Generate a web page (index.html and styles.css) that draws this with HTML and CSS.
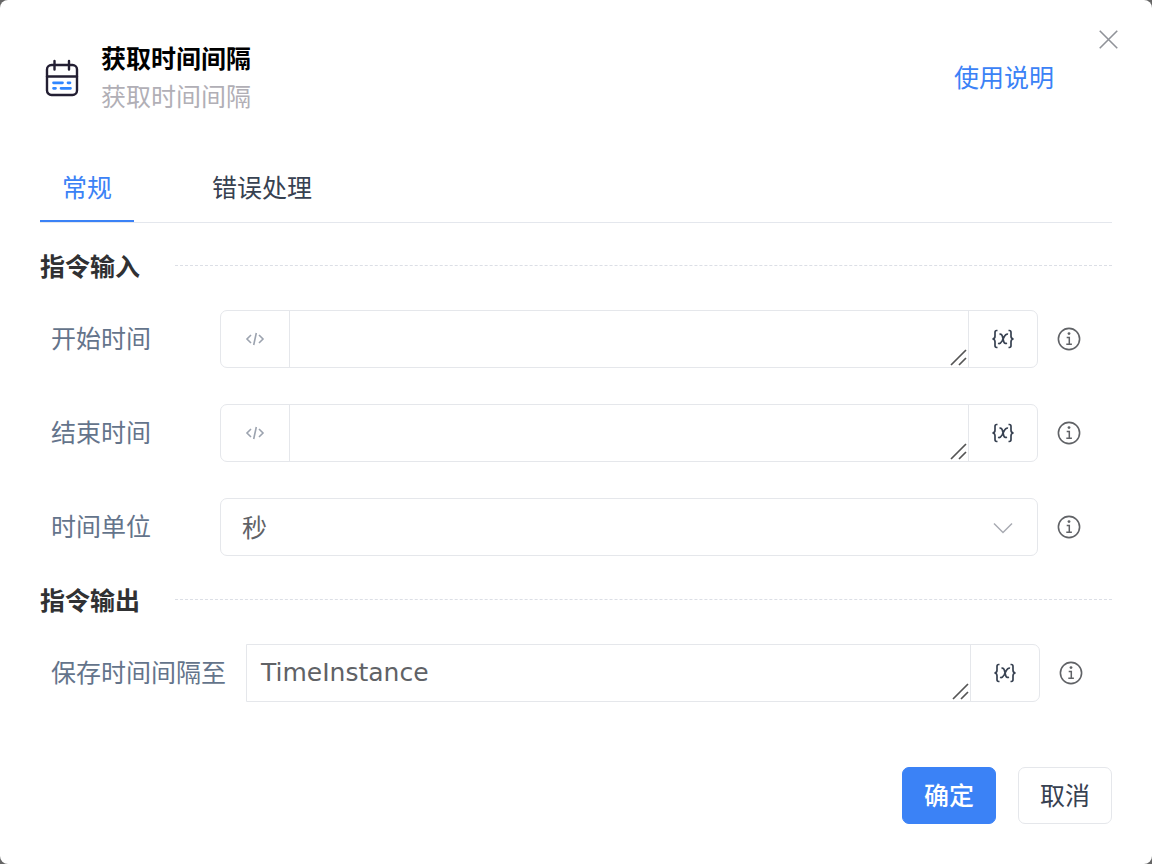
FILE: index.html
```html
<!DOCTYPE html>
<html lang="zh-CN">
<head>
<meta charset="utf-8">
<meta name="viewport" content="width=device-width, initial-scale=1">
<title>获取时间间隔</title>
<link rel="stylesheet" href="styles.css">
</head>
<body>
<svg class="symbols" aria-hidden="true">
  <symbol id="info" viewBox="0 0 24 24"><circle cx="12" cy="12" r="10.6" fill="none" stroke="currentColor" stroke-width="1.6"/><circle cx="12" cy="6.6" r="1.4" fill="currentColor"/><path d="M9.7 10.5H12.3V17.2M9.3 17.2H14.9" fill="none" stroke="currentColor" stroke-width="1.5"/></symbol>
  <symbol id="code" viewBox="0 0 20 14"><path d="M6 3L2 7L6 11M14 3L18 7L14 11M11.3 1L8.7 13" fill="none" stroke="currentColor" stroke-width="1.6"/></symbol>
  <symbol id="variable" viewBox="0 0 24 20"><path d="M6.5 1.5H5.6Q4 1.5 4 3.4V7.3Q4 9.7 1.5 10Q4 10.3 4 12.7V16.6Q4 18.5 5.6 18.5H6.5M17.5 1.5H18.4Q20 1.5 20 3.4V7.3Q20 9.7 22.5 10Q20 10.3 20 12.7V16.6Q20 18.5 18.4 18.5H17.5M8.5 5.4Q10.7 4.5 11.4 7.4L12.7 12.5Q13.4 15.2 16 14.2M17 5.3Q15 4.5 13.3 7.5L11 12.1Q9.1 15.3 7.1 14.3" fill="none" stroke="currentColor" stroke-width="1.7"/></symbol>
  <symbol id="grip" viewBox="0 0 17 17"><path d="M1 16L16 1M9 16L16 9" fill="none" stroke="currentColor" stroke-width="1.7"/></symbol>
</svg>
<main class="dialog">
  <header class="header">
    <svg class="logo" viewBox="0 0 34 38" aria-hidden="true">
      <rect x="2" y="6" width="30" height="30" rx="4.5" fill="none" stroke="#231f33" stroke-width="2.4"/>
      <path d="M2 17.5H32M9.5 2V10.5M24 2V10.5" fill="none" stroke="#231f33" stroke-width="2.4" stroke-linecap="round"/>
      <path d="M8.5 23.8H17.5M23 23.8H25M8.5 29.3H10.5M16 29.3H25.5" fill="none" stroke="#2f86ff" stroke-width="2.7" stroke-linecap="round"/>
    </svg>
    <div class="titles">
      <h1 class="title">获取时间间隔</h1>
      <p class="subtitle">获取时间间隔</p>
    </div>
    <a class="help" href="#">使用说明</a>
    <button class="close" type="button" aria-label="关闭"><svg class="close-icon" viewBox="0 0 18 18"><path d="M0.7 0.7L17.3 17.3M17.3 0.7L0.7 17.3" fill="none" stroke="currentColor" stroke-width="1.5"/></svg></button>
  </header>
  <nav class="tabs" role="tablist">
    <button class="tab active" type="button" role="tab" aria-selected="true">常规</button>
    <button class="tab" type="button" role="tab" aria-selected="false">错误处理</button>
  </nav>
  <form class="form">
    <h2 class="section">指令输入</h2>
    <div class="fields">
      <div class="row">
        <label class="label" for="start">开始时间</label>
        <div class="control">
          <button class="addon mode" type="button" aria-label="表达式"><svg class="code-icon"><use href="#code"/></svg></button>
          <div class="entry"><textarea class="text" id="start" rows="1"></textarea><svg class="grip"><use href="#grip"/></svg></div>
          <button class="addon variable" type="button" aria-label="变量"><svg class="variable-icon"><use href="#variable"/></svg></button>
        </div>
        <svg class="info"><use href="#info"/></svg>
      </div>
      <div class="row">
        <label class="label" for="end">结束时间</label>
        <div class="control">
          <button class="addon mode" type="button" aria-label="表达式"><svg class="code-icon"><use href="#code"/></svg></button>
          <div class="entry"><textarea class="text" id="end" rows="1"></textarea><svg class="grip"><use href="#grip"/></svg></div>
          <button class="addon variable" type="button" aria-label="变量"><svg class="variable-icon"><use href="#variable"/></svg></button>
        </div>
        <svg class="info"><use href="#info"/></svg>
      </div>
      <div class="row">
        <label class="label" for="unit">时间单位</label>
        <div class="control">
          <select class="select" id="unit"><option>秒</option></select>
          <svg class="arrow" viewBox="0 0 20 12"><path d="M1 1.5L10 10.5L19 1.5" fill="none" stroke="currentColor" stroke-width="1.5"/></svg>
        </div>
        <svg class="info"><use href="#info"/></svg>
      </div>
    </div>
    <h2 class="section">指令输出</h2>
    <div class="row output">
      <label class="label" for="save">保存时间间隔至</label>
      <div class="control">
        <div class="entry"><textarea class="text" id="save" rows="1">TimeInstance</textarea><svg class="grip"><use href="#grip"/></svg></div>
        <button class="addon variable" type="button" aria-label="变量"><svg class="variable-icon"><use href="#variable"/></svg></button>
      </div>
      <svg class="info"><use href="#info"/></svg>
    </div>
    <footer class="actions">
      <button class="button primary" type="button">确定</button>
      <button class="button" type="button">取消</button>
    </footer>
  </form>
</main>
</body>
</html>
```
FILE: styles.css
```css
* { box-sizing: border-box; }
html { background: #666; }
body {
  margin: 0;
  font-family: "Noto Sans CJK SC", sans-serif;
  font-size: 25px;
  line-height: 38px;
  color: #374151;
}
button, textarea, select { font: inherit; color: inherit; }
button { padding: 0; border: 0; background: none; cursor: pointer; }
h1, h2, p { margin: 0; font-size: inherit; }
svg { display: block; flex: none; }
.symbols { position: absolute; width: 0; height: 0; }

.dialog {
  position: relative;
  min-height: 100vh;
  padding: 38px 40px 40px;
  border-radius: 8px;
  background: #fff;
}
.header { display: flex; align-items: center; padding: 0 58px 0 5px; }
.logo { width: 34px; height: 38px; margin-top: 4px; }
.titles { flex: 1; margin-left: 22px; }
.title { font-weight: 700; color: #000; }
.subtitle { color: #b1afb6; }
.help { color: #3b82f6; text-decoration: none; }
.close { position: absolute; top: 30px; right: 34px; color: #909399; }
.close-icon { width: 19px; height: 19px; }

.tabs { display: flex; gap: 56px; margin-top: 40px; border-bottom: 1px solid #e4e7ed; }
.tab { height: 68px; padding: 0 22px 2px; border-bottom: 2px solid transparent; }
.tab.active { color: #3b82f6; border-bottom-color: #3b82f6; }

.section {
  display: flex;
  align-items: center;
  gap: 35px;
  margin: 23px 0 26px;
  font-weight: 700;
  color: #303133;
}
.section::after { content: ""; flex: 1; border-top: 1px dashed #dcdfe6; }
.fields { display: grid; gap: 36px; margin-bottom: 24px; }
.row { display: flex; align-items: center; padding: 0 31px 0 11px; }
.label { width: 169px; padding-bottom: 4px; color: #64748b; }
.output { padding-right: 29px; }
.output .label { width: auto; margin-right: 20px; }
.control {
  position: relative;
  display: flex;
  flex: 1;
  height: 58px;
  border: 1px solid #e5e7eb;
  border-radius: 7px;
}
.output .control { border-radius: 0 7px 7px 0; }
.addon { display: grid; place-items: center; width: 69px; }
.mode { color: #9ca3af; border-right: 1px solid #e5e7eb; }
.variable { color: #374151; border-left: 1px solid #e5e7eb; }
.code-icon { width: 20px; height: 14px; }
.variable-icon { width: 24px; height: 20px; }
.entry { position: relative; display: flex; flex: 1; }
.text {
  flex: 1;
  min-width: 0;
  padding: 9px 14px;
  border: 0;
  outline: 0;
  resize: none;
  overflow: hidden;
  background: none;
  font-family: "DejaVu Sans", "Noto Sans CJK SC", sans-serif;
  color: #606266;
}
.grip { position: absolute; right: 1px; bottom: 1px; width: 17px; height: 17px; color: #555; pointer-events: none; }
.select { flex: 1; padding: 0 21px 2px; border: 0; outline: 0; appearance: none; background: none; color: #606266; }
.arrow { position: absolute; right: 24px; top: 23px; width: 20px; height: 12px; color: #a8abb2; pointer-events: none; }
.info { width: 24px; height: 24px; margin-left: 19px; color: #606266; }

.actions { display: flex; justify-content: flex-end; gap: 22px; margin-top: 65px; }
.button { height: 57px; padding: 0 21px 4px; border: 1px solid #e5e7eb; border-radius: 7px; }
.primary { border-color: #3b82f6; background: #3b82f6; color: #fff; font-weight: 500; }
```
